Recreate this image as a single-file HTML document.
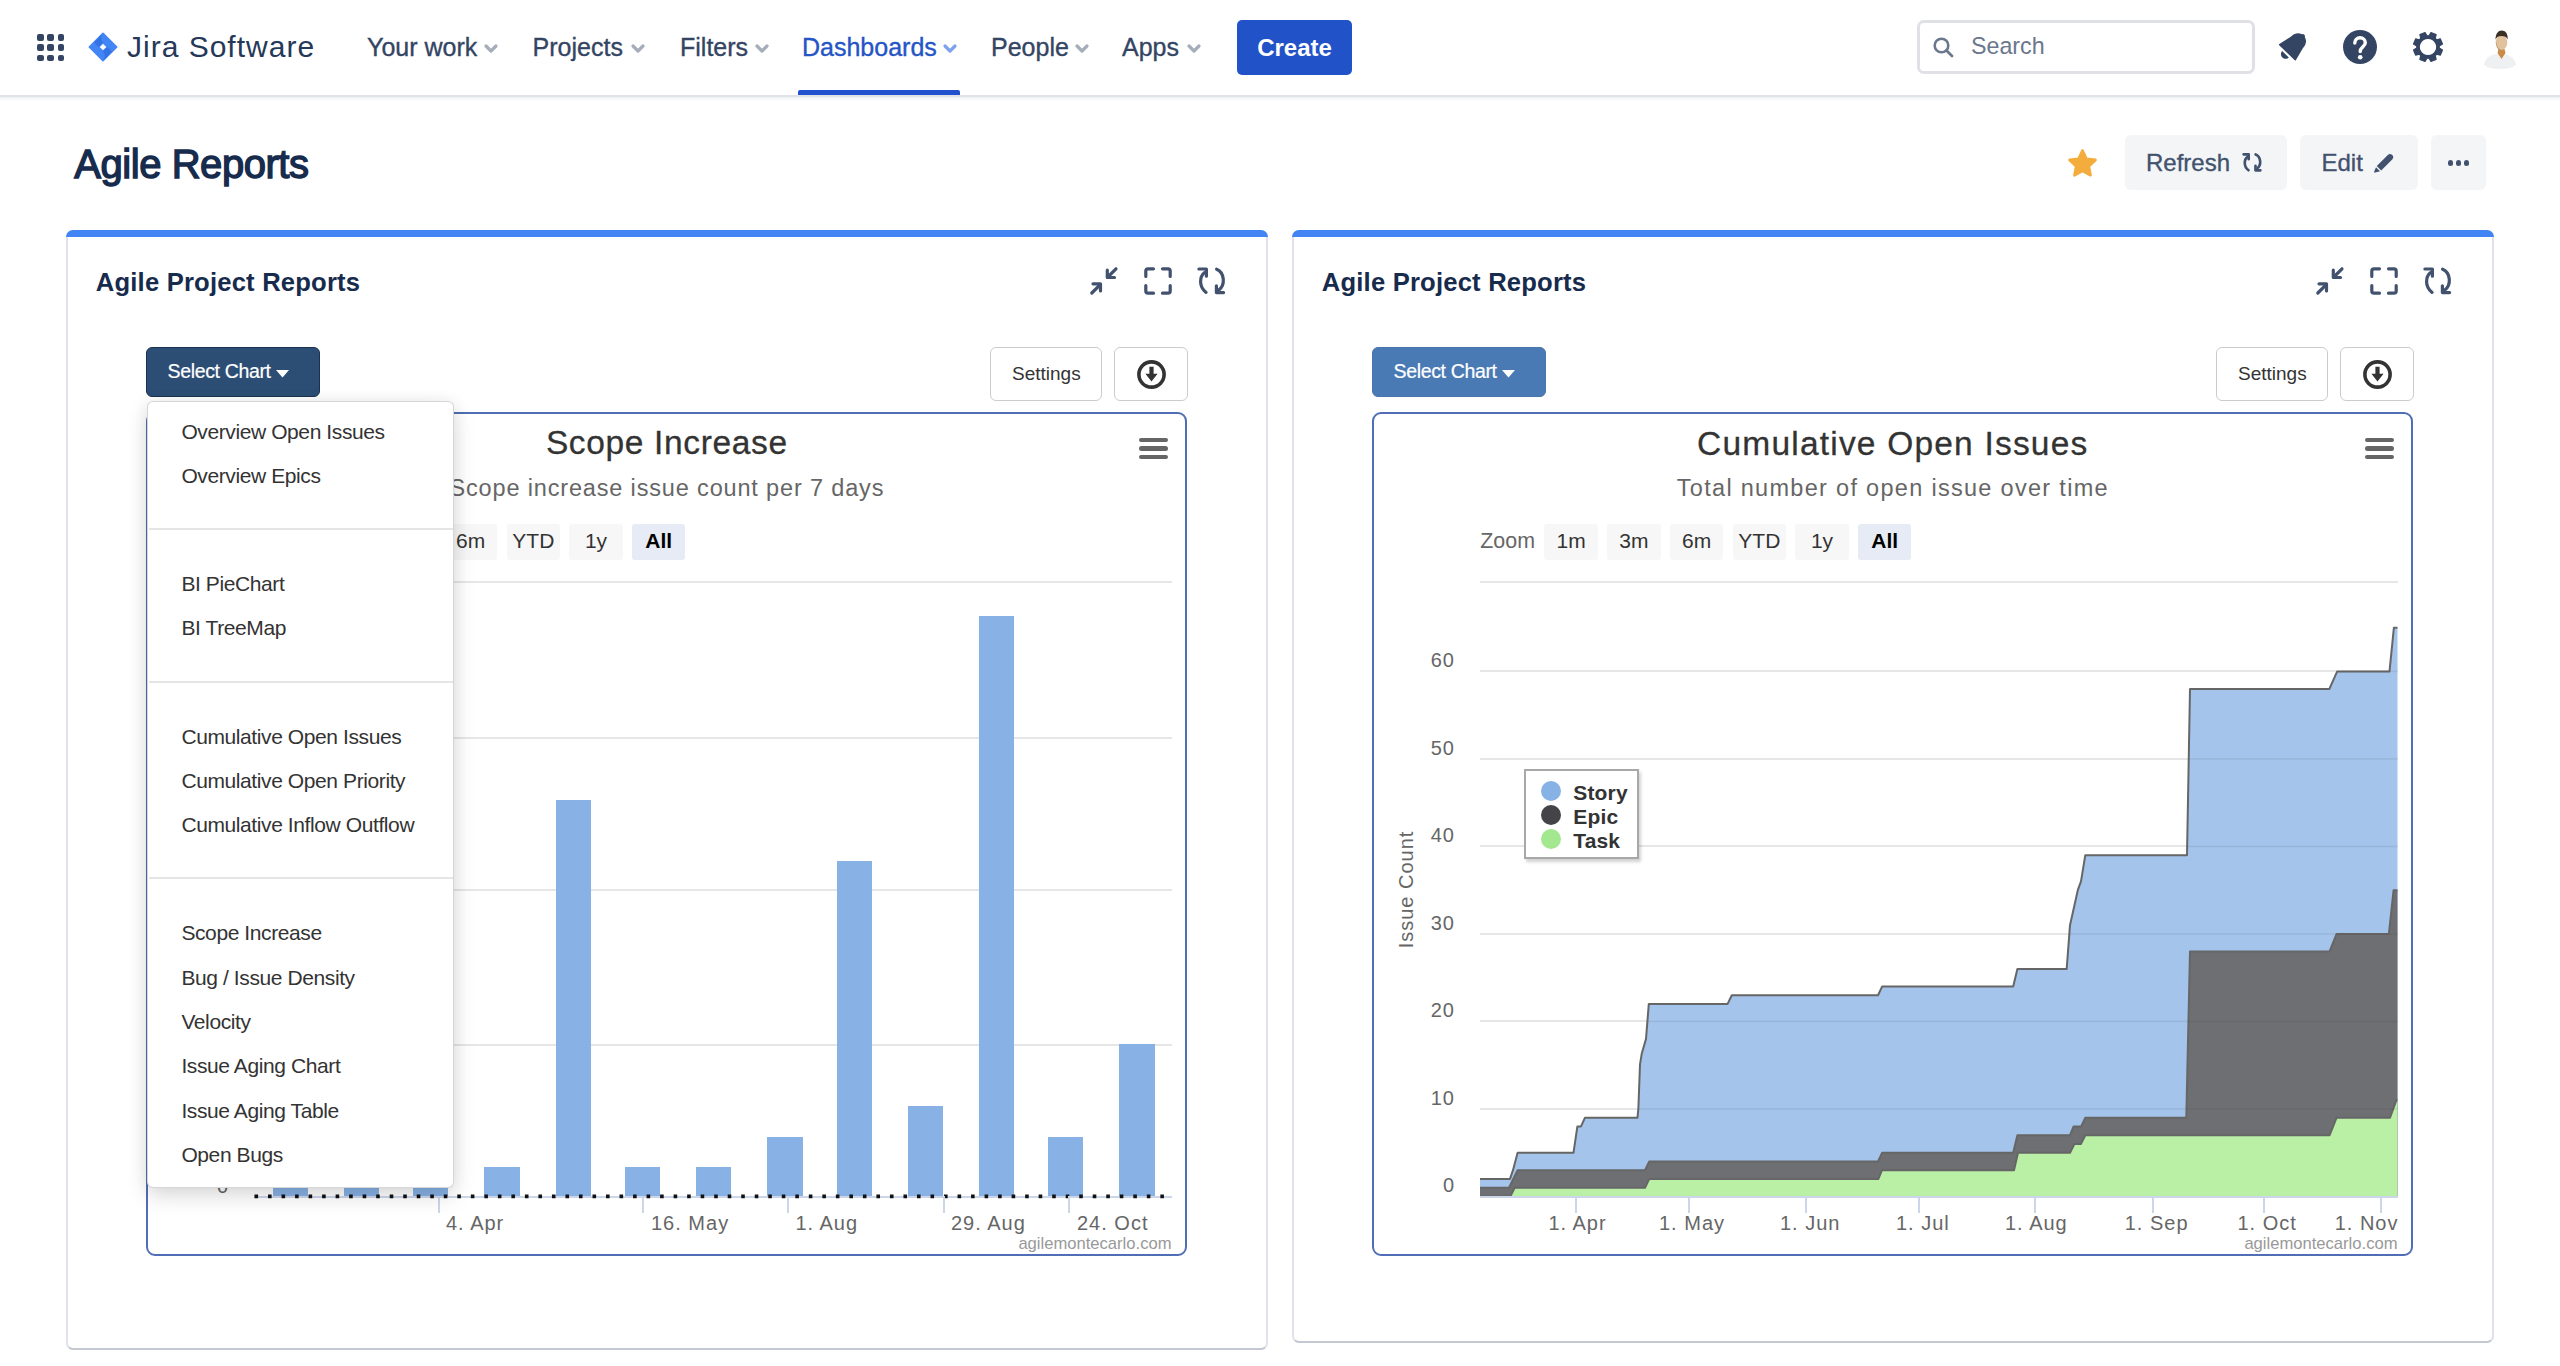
<!DOCTYPE html>
<html><head><meta charset="utf-8"><title>Agile Reports - Jira</title>
<style>
html,body{margin:0;padding:0;}
body{width:2560px;height:1366px;overflow:hidden;position:relative;background:#fff;font-family:"Liberation Sans",sans-serif;}
.t{position:absolute;white-space:nowrap;line-height:1;}
.a{position:absolute;box-sizing:border-box;}
svg{position:absolute;overflow:visible;}
</style></head><body>
<div class="a" style="left:0.00px;top:95.00px;width:2560.00px;height:2.00px;background:#e1e3e8;"></div>
<div class="a" style="left:0.00px;top:97.00px;width:2560.00px;height:4.00px;background:linear-gradient(#eef0f3,#fff);"></div>
<div class="a" style="left:37.00px;top:34.00px;width:6.80px;height:6.80px;background:#344563;border-radius:2px;"></div>
<div class="a" style="left:37.00px;top:44.35px;width:6.80px;height:6.80px;background:#344563;border-radius:2px;"></div>
<div class="a" style="left:37.00px;top:54.70px;width:6.80px;height:6.80px;background:#344563;border-radius:2px;"></div>
<div class="a" style="left:47.35px;top:34.00px;width:6.80px;height:6.80px;background:#344563;border-radius:2px;"></div>
<div class="a" style="left:47.35px;top:44.35px;width:6.80px;height:6.80px;background:#344563;border-radius:2px;"></div>
<div class="a" style="left:47.35px;top:54.70px;width:6.80px;height:6.80px;background:#344563;border-radius:2px;"></div>
<div class="a" style="left:57.70px;top:34.00px;width:6.80px;height:6.80px;background:#344563;border-radius:2px;"></div>
<div class="a" style="left:57.70px;top:44.35px;width:6.80px;height:6.80px;background:#344563;border-radius:2px;"></div>
<div class="a" style="left:57.70px;top:54.70px;width:6.80px;height:6.80px;background:#344563;border-radius:2px;"></div>
<svg style="left:88px;top:32px" width="30" height="30" viewBox="0 0 30 30">
<defs><linearGradient id="jg1" x1="0" y1="0" x2="1" y2="1"><stop offset="0" stop-color="#2a5fd8"/><stop offset="1" stop-color="#4384f5"/></linearGradient></defs>
<path d="M15 1.3 L28.7 15 L15 28.7 L1.3 15 Z M15 10.6 L10.6 15 L15 19.4 L19.4 15 Z" fill="#4285f4" fill-rule="evenodd" stroke="#4285f4" stroke-width="1.6" stroke-linejoin="round"/>
<path d="M15 1.3 C12.5 4 12.8 8 15 10.6 L10.6 15 L6.2 10.6 Z" fill="#2f6ae0" opacity=".7"/>
<path d="M15 28.7 C17.5 26 17.2 22 15 19.4 L19.4 15 L23.8 19.4 Z" fill="#2f6ae0" opacity=".7"/>
</svg>
<div class="t" style="left:127.00px;top:32.11px;font-size:30px;color:#253858;letter-spacing:1.0px;">Jira Software</div>
<div class="t" style="left:367.00px;top:34.84px;font-size:25px;color:#344563;-webkit-text-stroke:0.35px #344563;">Your work</div>
<svg style="left:484px;top:44px" width="14" height="10" viewBox="0 0 14 10"><path d="M2 2 L7 7 L12 2" fill="none" stroke="#a5adba" stroke-width="3.2" stroke-linecap="round" stroke-linejoin="round"/></svg>
<div class="t" style="left:532.60px;top:34.84px;font-size:25px;color:#344563;-webkit-text-stroke:0.35px #344563;">Projects</div>
<svg style="left:630.5px;top:44px" width="14" height="10" viewBox="0 0 14 10"><path d="M2 2 L7 7 L12 2" fill="none" stroke="#a5adba" stroke-width="3.2" stroke-linecap="round" stroke-linejoin="round"/></svg>
<div class="t" style="left:680.00px;top:34.84px;font-size:25px;color:#344563;-webkit-text-stroke:0.35px #344563;">Filters</div>
<svg style="left:754.5px;top:44px" width="14" height="10" viewBox="0 0 14 10"><path d="M2 2 L7 7 L12 2" fill="none" stroke="#a5adba" stroke-width="3.2" stroke-linecap="round" stroke-linejoin="round"/></svg>
<div class="t" style="left:802.00px;top:34.84px;font-size:25px;color:#2454c5;-webkit-text-stroke:0.35px #2454c5;">Dashboards</div>
<svg style="left:943.4px;top:44px" width="14" height="10" viewBox="0 0 14 10"><path d="M2 2 L7 7 L12 2" fill="none" stroke="#7ea3ec" stroke-width="3.2" stroke-linecap="round" stroke-linejoin="round"/></svg>
<div class="t" style="left:991.00px;top:34.84px;font-size:25px;color:#344563;-webkit-text-stroke:0.35px #344563;">People</div>
<svg style="left:1074.5px;top:44px" width="14" height="10" viewBox="0 0 14 10"><path d="M2 2 L7 7 L12 2" fill="none" stroke="#a5adba" stroke-width="3.2" stroke-linecap="round" stroke-linejoin="round"/></svg>
<div class="t" style="left:1122.00px;top:34.84px;font-size:25px;color:#344563;-webkit-text-stroke:0.35px #344563;">Apps</div>
<svg style="left:1186.5px;top:44px" width="14" height="10" viewBox="0 0 14 10"><path d="M2 2 L7 7 L12 2" fill="none" stroke="#a5adba" stroke-width="3.2" stroke-linecap="round" stroke-linejoin="round"/></svg>
<div class="a" style="left:798.00px;top:89.70px;width:162.00px;height:5.30px;background:#2151cc;border-radius:2px 2px 0 0;"></div>
<div class="a" style="left:1237.00px;top:20.00px;width:115.00px;height:54.50px;background:#2252c8;border-radius:5px;"></div>
<div class="t" style="left:794.50px;width:1000px;text-align:center;top:35.68px;font-size:24px;color:#fff;font-weight:700;">Create</div>
<div class="a" style="left:1917.00px;top:20.40px;width:337.50px;height:53.40px;border:3px solid #dfe1e6;border-radius:7px;background:#fff;"></div>
<svg style="left:1933px;top:37px" width="21" height="21" viewBox="0 0 21 21"><circle cx="8.5" cy="8.5" r="6.8" fill="none" stroke="#6b778c" stroke-width="2.6"/><path d="M13.5 13.5 L19 19" stroke="#6b778c" stroke-width="2.8" stroke-linecap="round"/></svg>
<div class="t" style="left:1971.00px;top:34.82px;font-size:23.25px;color:#6b778c;">Search</div>
<svg style="left:0;top:0" width="2560" height="100">
<g transform="translate(2287.3 52.4) rotate(44)" fill="#344563" stroke="#344563" stroke-width="1.6" stroke-linejoin="round">
<path d="M-10.8 -0.3 L10.8 -0.3 L7.6 -13.5 C7.6 -19.6 4.2 -22.6 0 -22.6 C-4.2 -22.6 -7.6 -19.6 -7.6 -13.5 Z"/>
<circle cx="0" cy="-22.6" r="2" stroke="none"/>
<path d="M-4.6 2.6 A4.6 4.6 0 0 0 4.6 2.6 Z" stroke="none"/></g></svg>
<svg style="left:2343px;top:30px" width="34" height="34" viewBox="0 0 34 34">
<circle cx="17" cy="17" r="17" fill="#344563"/>
<path d="M11.8 13 C11.8 9.8 14.2 7.8 17 7.8 C20 7.8 22.3 9.9 22.3 12.8 C22.3 16.6 17.2 17 17.2 21.6" fill="none" stroke="#fff" stroke-width="3.4" stroke-linecap="round"/>
<circle cx="17.2" cy="27.3" r="2.3" fill="#fff"/></svg>
<svg style="left:2410.5px;top:29.8px" width="34" height="34" viewBox="0 0 34 34">
<path d="M28.25,18.05 L31.50,19.98 L29.36,25.14 L25.70,24.22 L24.22,25.70 L25.14,29.36 L19.98,31.50 L18.05,28.25 L15.95,28.25 L14.02,31.50 L8.86,29.36 L9.78,25.70 L8.30,24.22 L4.64,25.14 L2.50,19.98 L5.75,18.05 L5.75,15.95 L2.50,14.02 L4.64,8.86 L8.30,9.78 L9.78,8.30 L8.86,4.64 L14.02,2.50 L15.95,5.75 L18.05,5.75 L19.98,2.50 L25.14,4.64 L24.22,8.30 L25.70,9.78 L29.36,8.86 L31.50,14.02 L28.25,15.95 Z M17 8.3 A8.7 8.7 0 1 0 17.01 8.3 Z" fill="#344563" fill-rule="evenodd" stroke="#344563" stroke-width="1.2" stroke-linejoin="round"/></svg>
<svg style="left:2482px;top:29px" width="36" height="40" viewBox="0 0 36 40">
<path d="M2 36 C3 29 8 26 14 25 L22 25 C28 26 33 29 34 36 C30 39 24 40 18 40 C12 40 6 39 2 36 Z" fill="#eff0f2"/>
<path d="M15.5 24 L19.5 30 L23.5 24 L22.5 20 L16.5 20 Z" fill="#c98a4a"/>
<ellipse cx="19.5" cy="13.5" rx="5.8" ry="7.5" fill="#e2c29c"/><path d="M14 11 C14 16 16 20 19 21 L17 21 C14.5 19 13.5 15 14 11 Z" fill="#9c6b45" opacity=".7"/>
<path d="M13.5 10.5 C13.5 4.5 16.5 1.5 19.5 1.5 C23.5 1.5 26 4.5 25.7 10.5 C24.5 7.5 22.5 7 19.5 7 C16.5 7 14.5 8 13.5 10.5 Z" fill="#3b3026"/>
</svg>
<div class="t" style="left:74.30px;top:143.84px;font-size:40px;color:#172b4d;letter-spacing:-0.45px;-webkit-text-stroke:1.4px #172b4d;">Agile Reports</div>
<svg style="left:2066px;top:148px" width="34" height="34" viewBox="0 0 34 34"><path d="M16.50,2.60 L20.38,10.86 L29.43,12.00 L22.78,18.24 L24.49,27.20 L16.50,22.80 L8.51,27.20 L10.22,18.24 L3.57,12.00 L12.62,10.86 Z" fill="#f4ad3d" stroke="#f4ad3d" stroke-width="2.8" stroke-linejoin="round"/></svg>
<div class="a" style="left:2125.00px;top:135.00px;width:161.50px;height:55.00px;background:#f4f5f7;border-radius:6px;"></div>
<div class="t" style="left:2146.00px;top:150.68px;font-size:24px;color:#42526e;-webkit-text-stroke:0.35px #42526e;">Refresh</div>
<svg style="left:2243px;top:152.8px" width="19" height="19" viewBox="0 0 28 28">
<g fill="none" stroke="#42526e" stroke-width="3.9" stroke-linecap="round" stroke-linejoin="round">
<path d="M0.9 2 L8.4 2 L8.4 9.2"/><path d="M6.6 5.6 C1.6 9.5 0.4 19.5 8.1 25.4"/>
<path d="M18.6 2.2 C26.5 5.5 28 18 20.2 23.6"/><path d="M18.4 18.8 L18.4 25.6 L25.6 25.6"/></g></svg>
<div class="a" style="left:2300.00px;top:135.00px;width:118.00px;height:55.00px;background:#f4f5f7;border-radius:6px;"></div>
<div class="t" style="left:2321.50px;top:150.68px;font-size:24px;color:#42526e;-webkit-text-stroke:0.35px #42526e;">Edit</div>
<svg style="left:2373px;top:152px" width="22" height="22" viewBox="0 0 22 22">
<path d="M14.8 3 Q17 0.8 19.2 3 Q21.4 5.2 19.2 7.4 L8.2 18.4 L3.8 14 Z" fill="#42526e"/><path d="M3 15.2 L7 19.2 L2.2 20.6 Q0.8 20.8 1.2 19.6 Z" fill="#42526e"/></svg>
<div class="a" style="left:2431.00px;top:135.00px;width:54.50px;height:55.00px;background:#f4f5f7;border-radius:6px;"></div>
<div class="a" style="left:2447.90px;top:160.40px;width:5.20px;height:5.20px;background:#42526e;border-radius:50%;"></div>
<div class="a" style="left:2455.90px;top:160.40px;width:5.20px;height:5.20px;background:#42526e;border-radius:50%;"></div>
<div class="a" style="left:2463.90px;top:160.40px;width:5.20px;height:5.20px;background:#42526e;border-radius:50%;"></div>
<div class="a" style="left:66.00px;top:230.00px;width:1202.00px;height:1119.50px;border:2px solid #e0e2e7;border-top:none;border-bottom:2.5px solid #c3c8d1;border-radius:7px;background:#fff;"></div>
<div class="a" style="left:66.00px;top:230.00px;width:1202.00px;height:7.00px;background:#4384f5;border-radius:7px 7px 0 0;"></div>
<div class="a" style="left:1292.00px;top:230.00px;width:1202.00px;height:1112.50px;border:2px solid #e0e2e7;border-top:none;border-bottom:2.5px solid #c3c8d1;border-radius:7px;background:#fff;"></div>
<div class="a" style="left:1292.00px;top:230.00px;width:1202.00px;height:7.00px;background:#4384f5;border-radius:7px 7px 0 0;"></div>
<div class="t" style="left:95.80px;top:269.53px;font-size:25.6px;color:#172b4d;font-weight:700;letter-spacing:0.2px;">Agile Project Reports</div>
<svg style="left:1089.5px;top:267px" width="28" height="28" viewBox="0 0 28 28">
<g fill="none" stroke="#42526e" stroke-width="3.2" stroke-linecap="round" stroke-linejoin="round">
<path d="M1.8 26 L10 17.8"/><path d="M3 16.8 L10.5 16.8 L10.5 24"/>
<path d="M26 1.8 L17.8 10"/><path d="M17.3 3.2 L17.3 10.5 L24.5 10.5"/></g></svg>
<svg style="left:1144px;top:267px" width="28" height="28" viewBox="0 0 28 28">
<g fill="none" stroke="#42526e" stroke-width="3.2" stroke-linecap="round" stroke-linejoin="round">
<path d="M1.8 9.5 L1.8 4 Q1.8 1.8 4 1.8 L9.5 1.8"/><path d="M18.5 1.8 L24 1.8 Q26.2 1.8 26.2 4 L26.2 9.5"/>
<path d="M26.2 18.5 L26.2 24 Q26.2 26.2 24 26.2 L18.5 26.2"/><path d="M9.5 26.2 L4 26.2 Q1.8 26.2 1.8 24 L1.8 18.5"/></g></svg>
<svg style="left:1198.2px;top:266.5px" width="28" height="28" viewBox="0 0 28 28">
<g fill="none" stroke="#42526e" stroke-width="3.2" stroke-linecap="round" stroke-linejoin="round">
<path d="M0.9 2 L8.4 2 L8.4 9.2"/><path d="M6.6 5.6 C1.6 9.5 0.4 19.5 8.1 25.4"/>
<path d="M18.6 2.2 C26.5 5.5 28 18 20.2 23.6"/><path d="M18.4 18.8 L18.4 25.6 L25.6 25.6"/></g></svg>
<div class="t" style="left:1321.80px;top:269.53px;font-size:25.6px;color:#172b4d;font-weight:700;letter-spacing:0.2px;">Agile Project Reports</div>
<svg style="left:2315.5px;top:267px" width="28" height="28" viewBox="0 0 28 28">
<g fill="none" stroke="#42526e" stroke-width="3.2" stroke-linecap="round" stroke-linejoin="round">
<path d="M1.8 26 L10 17.8"/><path d="M3 16.8 L10.5 16.8 L10.5 24"/>
<path d="M26 1.8 L17.8 10"/><path d="M17.3 3.2 L17.3 10.5 L24.5 10.5"/></g></svg>
<svg style="left:2370px;top:267px" width="28" height="28" viewBox="0 0 28 28">
<g fill="none" stroke="#42526e" stroke-width="3.2" stroke-linecap="round" stroke-linejoin="round">
<path d="M1.8 9.5 L1.8 4 Q1.8 1.8 4 1.8 L9.5 1.8"/><path d="M18.5 1.8 L24 1.8 Q26.2 1.8 26.2 4 L26.2 9.5"/>
<path d="M26.2 18.5 L26.2 24 Q26.2 26.2 24 26.2 L18.5 26.2"/><path d="M9.5 26.2 L4 26.2 Q1.8 26.2 1.8 24 L1.8 18.5"/></g></svg>
<svg style="left:2424.2px;top:266.5px" width="28" height="28" viewBox="0 0 28 28">
<g fill="none" stroke="#42526e" stroke-width="3.2" stroke-linecap="round" stroke-linejoin="round">
<path d="M0.9 2 L8.4 2 L8.4 9.2"/><path d="M6.6 5.6 C1.6 9.5 0.4 19.5 8.1 25.4"/>
<path d="M18.6 2.2 C26.5 5.5 28 18 20.2 23.6"/><path d="M18.4 18.8 L18.4 25.6 L25.6 25.6"/></g></svg>
<div class="a" style="left:146.00px;top:347.00px;width:174.00px;height:50.00px;background:#2d4e74;border:1.5px solid #1b324f;border-radius:6px;"></div>
<div class="t" style="left:167.60px;top:362.09px;font-size:19.5px;color:#fff;letter-spacing:-0.35px;-webkit-text-stroke:0.2px #fff;">Select Chart</div>
<svg style="left:276px;top:369.5px" width="13" height="8" viewBox="0 0 13 8"><path d="M0 0 L13 0 L6.5 7.5 Z" fill="#fff"/></svg>
<div class="a" style="left:1372.00px;top:347.00px;width:174.00px;height:50.00px;background:#4a7ab4;border:1.5px solid #4775ad;border-radius:6px;"></div>
<div class="t" style="left:1393.60px;top:362.09px;font-size:19.5px;color:#fff;letter-spacing:-0.35px;-webkit-text-stroke:0.2px #fff;">Select Chart</div>
<svg style="left:1502px;top:369.5px" width="13" height="8" viewBox="0 0 13 8"><path d="M0 0 L13 0 L6.5 7.5 Z" fill="#fff"/></svg>
<div class="a" style="left:990.00px;top:347.00px;width:112.00px;height:54.00px;border:1.5px solid #cccccc;border-radius:6px;background:#fff;"></div>
<div class="t" style="left:1012.00px;top:363.92px;font-size:19px;color:#333;">Settings</div>
<div class="a" style="left:1114.00px;top:347.00px;width:74.00px;height:54.00px;border:1.5px solid #cccccc;border-radius:6px;background:#fff;"></div>
<svg style="left:1137px;top:359.5px" width="29" height="29" viewBox="0 0 29 29">
<circle cx="14.5" cy="14.5" r="12.6" fill="none" stroke="#333" stroke-width="3.6"/>
<path d="M12.4 6.8 L16.6 6.8 L16.6 13.8 L20.6 13.8 L14.5 21.6 L8.4 13.8 L12.4 13.8 Z" fill="#333"/></svg>
<div class="a" style="left:146.00px;top:412.00px;width:1041.00px;height:844.00px;border:2px solid #506eb5;border-radius:9px;background:#fff;"></div>
<div class="a" style="left:1139.00px;top:437.70px;width:28.50px;height:4.60px;background:#666;border-radius:3px;"></div>
<div class="a" style="left:1139.00px;top:446.20px;width:28.50px;height:4.60px;background:#666;border-radius:3px;"></div>
<div class="a" style="left:1139.00px;top:454.70px;width:28.50px;height:4.60px;background:#666;border-radius:3px;"></div>
<div class="t" style="left:254.30px;top:530.88px;font-size:21.4px;color:#666;">Zoom</div>
<div class="a" style="left:318.40px;top:524.20px;width:53.60px;height:36.30px;background:#f7f7f7;border-radius:3px;"></div>
<div class="t" style="left:-154.80px;width:1000px;text-align:center;top:529.82px;font-size:21px;color:#333;">1m</div>
<div class="a" style="left:381.10px;top:524.20px;width:53.60px;height:36.30px;background:#f7f7f7;border-radius:3px;"></div>
<div class="t" style="left:-92.10px;width:1000px;text-align:center;top:529.82px;font-size:21px;color:#333;">3m</div>
<div class="a" style="left:443.80px;top:524.20px;width:53.60px;height:36.30px;background:#f7f7f7;border-radius:3px;"></div>
<div class="t" style="left:-29.40px;width:1000px;text-align:center;top:529.82px;font-size:21px;color:#333;">6m</div>
<div class="a" style="left:506.50px;top:524.20px;width:53.60px;height:36.30px;background:#f7f7f7;border-radius:3px;"></div>
<div class="t" style="left:33.30px;width:1000px;text-align:center;top:529.82px;font-size:21px;color:#333;">YTD</div>
<div class="a" style="left:569.20px;top:524.20px;width:53.60px;height:36.30px;background:#f7f7f7;border-radius:3px;"></div>
<div class="t" style="left:96.00px;width:1000px;text-align:center;top:529.82px;font-size:21px;color:#333;">1y</div>
<div class="a" style="left:631.90px;top:524.20px;width:53.60px;height:36.30px;background:#e6ebf5;border-radius:3px;"></div>
<div class="t" style="left:158.70px;width:1000px;text-align:center;top:529.82px;font-size:21px;color:#000;font-weight:700;">All</div>
<div class="a" style="left:254.00px;top:581.00px;width:917.50px;height:2.00px;background:#e6e6e6;"></div>
<div class="t" style="right:1388.50px;top:1235.95px;font-size:16.6px;color:#999;">agilemontecarlo.com</div>
<div class="a" style="left:254.00px;top:1195.50px;width:917.50px;height:2.00px;background:#ccd6eb;"></div>
<div class="a" style="left:2216.00px;top:347.00px;width:112.00px;height:54.00px;border:1.5px solid #cccccc;border-radius:6px;background:#fff;"></div>
<div class="t" style="left:2238.00px;top:363.92px;font-size:19px;color:#333;">Settings</div>
<div class="a" style="left:2340.00px;top:347.00px;width:74.00px;height:54.00px;border:1.5px solid #cccccc;border-radius:6px;background:#fff;"></div>
<svg style="left:2363px;top:359.5px" width="29" height="29" viewBox="0 0 29 29">
<circle cx="14.5" cy="14.5" r="12.6" fill="none" stroke="#333" stroke-width="3.6"/>
<path d="M12.4 6.8 L16.6 6.8 L16.6 13.8 L20.6 13.8 L14.5 21.6 L8.4 13.8 L12.4 13.8 Z" fill="#333"/></svg>
<div class="a" style="left:1372.00px;top:412.00px;width:1041.00px;height:844.00px;border:2px solid #506eb5;border-radius:9px;background:#fff;"></div>
<div class="a" style="left:2365.00px;top:437.70px;width:28.50px;height:4.60px;background:#666;border-radius:3px;"></div>
<div class="a" style="left:2365.00px;top:446.20px;width:28.50px;height:4.60px;background:#666;border-radius:3px;"></div>
<div class="a" style="left:2365.00px;top:454.70px;width:28.50px;height:4.60px;background:#666;border-radius:3px;"></div>
<div class="t" style="left:1480.30px;top:530.88px;font-size:21.4px;color:#666;">Zoom</div>
<div class="a" style="left:1544.40px;top:524.20px;width:53.60px;height:36.30px;background:#f7f7f7;border-radius:3px;"></div>
<div class="t" style="left:1071.20px;width:1000px;text-align:center;top:529.82px;font-size:21px;color:#333;">1m</div>
<div class="a" style="left:1607.10px;top:524.20px;width:53.60px;height:36.30px;background:#f7f7f7;border-radius:3px;"></div>
<div class="t" style="left:1133.90px;width:1000px;text-align:center;top:529.82px;font-size:21px;color:#333;">3m</div>
<div class="a" style="left:1669.80px;top:524.20px;width:53.60px;height:36.30px;background:#f7f7f7;border-radius:3px;"></div>
<div class="t" style="left:1196.60px;width:1000px;text-align:center;top:529.82px;font-size:21px;color:#333;">6m</div>
<div class="a" style="left:1732.50px;top:524.20px;width:53.60px;height:36.30px;background:#f7f7f7;border-radius:3px;"></div>
<div class="t" style="left:1259.30px;width:1000px;text-align:center;top:529.82px;font-size:21px;color:#333;">YTD</div>
<div class="a" style="left:1795.20px;top:524.20px;width:53.60px;height:36.30px;background:#f7f7f7;border-radius:3px;"></div>
<div class="t" style="left:1322.00px;width:1000px;text-align:center;top:529.82px;font-size:21px;color:#333;">1y</div>
<div class="a" style="left:1857.90px;top:524.20px;width:53.60px;height:36.30px;background:#e6ebf5;border-radius:3px;"></div>
<div class="t" style="left:1384.70px;width:1000px;text-align:center;top:529.82px;font-size:21px;color:#000;font-weight:700;">All</div>
<div class="a" style="left:1480.00px;top:581.00px;width:917.50px;height:2.00px;background:#e6e6e6;"></div>
<div class="t" style="right:162.50px;top:1235.95px;font-size:16.6px;color:#999;">agilemontecarlo.com</div>
<div class="a" style="left:1480.00px;top:1195.50px;width:917.50px;height:2.00px;background:#ccd6eb;"></div>
<div class="t" style="left:166.50px;width:1000px;text-align:center;top:426.14px;font-size:33.5px;color:#333;letter-spacing:0.65px;text-indent:0.65px;-webkit-text-stroke:0.3px #333;">Scope Increase</div>
<div class="t" style="left:449.50px;top:476.91px;font-size:23.5px;color:#666;letter-spacing:0.84px;">Scope increase issue count per 7 days</div>
<div class="a" style="left:254.00px;top:736.50px;width:917.50px;height:2.00px;background:#e6e6e6;"></div>
<div class="a" style="left:254.00px;top:889.00px;width:917.50px;height:2.00px;background:#e6e6e6;"></div>
<div class="a" style="left:254.00px;top:1043.50px;width:917.50px;height:2.00px;background:#e6e6e6;"></div>
<div class="a" style="left:272.60px;top:1167.00px;width:35.30px;height:29.00px;background:#88b2e6;"></div>
<div class="a" style="left:343.70px;top:1167.00px;width:35.30px;height:29.00px;background:#88b2e6;"></div>
<div class="a" style="left:413.00px;top:1167.00px;width:35.30px;height:29.00px;background:#88b2e6;"></div>
<div class="a" style="left:484.30px;top:1167.20px;width:35.30px;height:28.80px;background:#88b2e6;"></div>
<div class="a" style="left:555.50px;top:800.00px;width:35.30px;height:396.00px;background:#88b2e6;"></div>
<div class="a" style="left:625.00px;top:1167.20px;width:35.30px;height:28.80px;background:#88b2e6;"></div>
<div class="a" style="left:696.00px;top:1167.20px;width:35.30px;height:28.80px;background:#88b2e6;"></div>
<div class="a" style="left:767.30px;top:1137.00px;width:35.30px;height:59.00px;background:#88b2e6;"></div>
<div class="a" style="left:836.70px;top:861.00px;width:35.30px;height:335.00px;background:#88b2e6;"></div>
<div class="a" style="left:907.50px;top:1106.00px;width:35.30px;height:90.00px;background:#88b2e6;"></div>
<div class="a" style="left:979.00px;top:615.50px;width:35.30px;height:580.50px;background:#88b2e6;"></div>
<div class="a" style="left:1048.00px;top:1137.00px;width:35.30px;height:59.00px;background:#88b2e6;"></div>
<div class="a" style="left:1119.40px;top:1044.40px;width:35.30px;height:151.60px;background:#88b2e6;"></div>
<svg style="left:0;top:0" width="2560" height="1366"><path d="M254.50 1194.6 h3.6 v3.6 h-3.6 Z M268.02 1194.6 h3.6 v3.6 h-3.6 Z M281.54 1194.6 h3.6 v3.6 h-3.6 Z M295.06 1194.6 h3.6 v3.6 h-3.6 Z M308.58 1194.6 h3.6 v3.6 h-3.6 Z M322.10 1194.6 h3.6 v3.6 h-3.6 Z M335.62 1194.6 h3.6 v3.6 h-3.6 Z M349.14 1194.6 h3.6 v3.6 h-3.6 Z M362.66 1194.6 h3.6 v3.6 h-3.6 Z M376.18 1194.6 h3.6 v3.6 h-3.6 Z M389.70 1194.6 h3.6 v3.6 h-3.6 Z M403.22 1194.6 h3.6 v3.6 h-3.6 Z M416.74 1194.6 h3.6 v3.6 h-3.6 Z M430.26 1194.6 h3.6 v3.6 h-3.6 Z M443.78 1194.6 h3.6 v3.6 h-3.6 Z M457.30 1194.6 h3.6 v3.6 h-3.6 Z M470.82 1194.6 h3.6 v3.6 h-3.6 Z M484.34 1194.6 h3.6 v3.6 h-3.6 Z M497.86 1194.6 h3.6 v3.6 h-3.6 Z M511.38 1194.6 h3.6 v3.6 h-3.6 Z M524.90 1194.6 h3.6 v3.6 h-3.6 Z M538.42 1194.6 h3.6 v3.6 h-3.6 Z M551.94 1194.6 h3.6 v3.6 h-3.6 Z M565.46 1194.6 h3.6 v3.6 h-3.6 Z M578.98 1194.6 h3.6 v3.6 h-3.6 Z M592.50 1194.6 h3.6 v3.6 h-3.6 Z M606.02 1194.6 h3.6 v3.6 h-3.6 Z M619.54 1194.6 h3.6 v3.6 h-3.6 Z M633.06 1194.6 h3.6 v3.6 h-3.6 Z M646.58 1194.6 h3.6 v3.6 h-3.6 Z M660.10 1194.6 h3.6 v3.6 h-3.6 Z M673.62 1194.6 h3.6 v3.6 h-3.6 Z M687.14 1194.6 h3.6 v3.6 h-3.6 Z M700.66 1194.6 h3.6 v3.6 h-3.6 Z M714.18 1194.6 h3.6 v3.6 h-3.6 Z M727.70 1194.6 h3.6 v3.6 h-3.6 Z M741.22 1194.6 h3.6 v3.6 h-3.6 Z M754.74 1194.6 h3.6 v3.6 h-3.6 Z M768.26 1194.6 h3.6 v3.6 h-3.6 Z M781.78 1194.6 h3.6 v3.6 h-3.6 Z M795.30 1194.6 h3.6 v3.6 h-3.6 Z M808.82 1194.6 h3.6 v3.6 h-3.6 Z M822.34 1194.6 h3.6 v3.6 h-3.6 Z M835.86 1194.6 h3.6 v3.6 h-3.6 Z M849.38 1194.6 h3.6 v3.6 h-3.6 Z M862.90 1194.6 h3.6 v3.6 h-3.6 Z M876.42 1194.6 h3.6 v3.6 h-3.6 Z M889.94 1194.6 h3.6 v3.6 h-3.6 Z M903.46 1194.6 h3.6 v3.6 h-3.6 Z M916.98 1194.6 h3.6 v3.6 h-3.6 Z M930.50 1194.6 h3.6 v3.6 h-3.6 Z M944.02 1194.6 h3.6 v3.6 h-3.6 Z M957.54 1194.6 h3.6 v3.6 h-3.6 Z M971.06 1194.6 h3.6 v3.6 h-3.6 Z M984.58 1194.6 h3.6 v3.6 h-3.6 Z M998.10 1194.6 h3.6 v3.6 h-3.6 Z M1011.62 1194.6 h3.6 v3.6 h-3.6 Z M1025.14 1194.6 h3.6 v3.6 h-3.6 Z M1038.66 1194.6 h3.6 v3.6 h-3.6 Z M1052.18 1194.6 h3.6 v3.6 h-3.6 Z M1065.70 1194.6 h3.6 v3.6 h-3.6 Z M1079.22 1194.6 h3.6 v3.6 h-3.6 Z M1092.74 1194.6 h3.6 v3.6 h-3.6 Z M1106.26 1194.6 h3.6 v3.6 h-3.6 Z M1119.78 1194.6 h3.6 v3.6 h-3.6 Z M1133.30 1194.6 h3.6 v3.6 h-3.6 Z M1146.82 1194.6 h3.6 v3.6 h-3.6 Z M1160.34 1194.6 h3.6 v3.6 h-3.6 Z" fill="#111"/></svg>
<div class="a" style="left:438.00px;top:1196.00px;width:2.00px;height:16.50px;background:#ccd6eb;"></div>
<div class="a" style="left:641.50px;top:1196.00px;width:2.00px;height:16.50px;background:#ccd6eb;"></div>
<div class="a" style="left:786.50px;top:1196.00px;width:2.00px;height:16.50px;background:#ccd6eb;"></div>
<div class="a" style="left:943.00px;top:1196.00px;width:2.00px;height:16.50px;background:#ccd6eb;"></div>
<div class="a" style="left:1068.00px;top:1196.00px;width:2.00px;height:16.50px;background:#ccd6eb;"></div>
<div class="t" style="left:446.00px;top:1213.07px;font-size:20px;color:#666;letter-spacing:1px;">4. Apr</div>
<div class="t" style="left:651.00px;top:1213.07px;font-size:20px;color:#666;letter-spacing:1px;">16. May</div>
<div class="t" style="left:795.40px;top:1213.07px;font-size:20px;color:#666;letter-spacing:1px;">1. Aug</div>
<div class="t" style="left:951.00px;top:1213.07px;font-size:20px;color:#666;letter-spacing:1px;">29. Aug</div>
<div class="t" style="left:1077.00px;top:1213.07px;font-size:20px;color:#666;letter-spacing:1px;">24. Oct</div>
<div class="t" style="right:2332.00px;top:1176.07px;font-size:20px;color:#666;">0</div>
<div class="t" style="left:1392.20px;width:1000px;text-align:center;top:426.64px;font-size:33.5px;color:#333;letter-spacing:1.2px;text-indent:1.2px;-webkit-text-stroke:0.3px #333;">Cumulative Open Issues</div>
<div class="t" style="left:1392.20px;width:1000px;text-align:center;top:476.81px;font-size:23.5px;color:#666;letter-spacing:1.3px;text-indent:1.3px;">Total number of open issue over time</div>
<div class="a" style="left:1480.00px;top:1107.90px;width:917.50px;height:2.00px;background:#e6e6e6;"></div>
<div class="a" style="left:1480.00px;top:1020.40px;width:917.50px;height:2.00px;background:#e6e6e6;"></div>
<div class="a" style="left:1480.00px;top:932.90px;width:917.50px;height:2.00px;background:#e6e6e6;"></div>
<div class="a" style="left:1480.00px;top:845.40px;width:917.50px;height:2.00px;background:#e6e6e6;"></div>
<div class="a" style="left:1480.00px;top:757.90px;width:917.50px;height:2.00px;background:#e6e6e6;"></div>
<div class="a" style="left:1480.00px;top:670.40px;width:917.50px;height:2.00px;background:#e6e6e6;"></div>
<div class="t" style="right:1106.00px;top:1175.47px;font-size:20px;color:#666;letter-spacing:1px;margin-right:-1px;">0</div>
<div class="t" style="right:1106.00px;top:1087.97px;font-size:20px;color:#666;letter-spacing:1px;margin-right:-1px;">10</div>
<div class="t" style="right:1106.00px;top:1000.47px;font-size:20px;color:#666;letter-spacing:1px;margin-right:-1px;">20</div>
<div class="t" style="right:1106.00px;top:912.97px;font-size:20px;color:#666;letter-spacing:1px;margin-right:-1px;">30</div>
<div class="t" style="right:1106.00px;top:825.47px;font-size:20px;color:#666;letter-spacing:1px;margin-right:-1px;">40</div>
<div class="t" style="right:1106.00px;top:737.97px;font-size:20px;color:#666;letter-spacing:1px;margin-right:-1px;">50</div>
<div class="t" style="right:1106.00px;top:650.47px;font-size:20px;color:#666;letter-spacing:1px;margin-right:-1px;">60</div>
<svg style="left:0;top:0" width="2560" height="1366"><text x="0" y="0" transform="translate(1412.5 889.5) rotate(-90)" text-anchor="middle" font-family="Liberation Sans" font-size="20" letter-spacing="1" fill="#666">Issue Count</text></svg>
<svg style="left:0;top:0" width="2560" height="1366"><path d="M1480.0 1178.9 L1510.0 1178.9 L1513.0 1170.2 L1517.6 1152.7 L1573.5 1152.7 L1577.4 1126.4 L1581.0 1126.4 L1585.0 1117.7 L1637.5 1117.7 L1638.4 1108.0 L1640.0 1064.3 L1641.7 1053.8 L1646.0 1038.9 L1648.8 1003.9 L1727.6 1003.9 L1731.8 995.2 L1878.0 995.2 L1882.2 986.4 L2013.2 986.4 L2017.4 968.9 L2066.7 968.9 L2070.0 925.2 L2077.8 890.2 L2081.0 881.4 L2085.3 855.2 L2187.0 855.2 L2190.0 688.9 L2329.4 688.9 L2337.2 671.4 L2389.5 671.4 L2393.9 627.7 L2397.5 627.7 L2397.5 1196.4 L1480 1196.4 Z" fill="#a4c4ec"/><path d="M1480.0 1178.9 L1510.0 1178.9 L1513.0 1170.2 L1517.6 1152.7 L1573.5 1152.7 L1577.4 1126.4 L1581.0 1126.4 L1585.0 1117.7 L1637.5 1117.7 L1638.4 1108.0 L1640.0 1064.3 L1641.7 1053.8 L1646.0 1038.9 L1648.8 1003.9 L1727.6 1003.9 L1731.8 995.2 L1878.0 995.2 L1882.2 986.4 L2013.2 986.4 L2017.4 968.9 L2066.7 968.9 L2070.0 925.2 L2077.8 890.2 L2081.0 881.4 L2085.3 855.2 L2187.0 855.2 L2190.0 688.9 L2329.4 688.9 L2337.2 671.4 L2389.5 671.4 L2393.9 627.7 L2397.5 627.7" fill="none" stroke="#666" stroke-width="2" stroke-linejoin="round"/><path d="M1480.0 1187.7 L1509.0 1187.7 L1517.6 1170.2 L1645.0 1170.2 L1649.3 1161.4 L1878.0 1161.4 L1882.2 1152.7 L2013.2 1152.7 L2017.4 1135.2 L2070.0 1135.2 L2073.6 1126.4 L2081.2 1126.4 L2085.3 1117.7 L2186.3 1117.7 L2190.0 951.4 L2329.6 951.4 L2336.6 933.9 L2388.9 933.9 L2393.6 890.2 L2397.5 890.2 L2397.5 1196.4 L1480 1196.4 Z" fill="#6e6f73"/><path d="M1480.0 1187.7 L1509.0 1187.7 L1517.6 1170.2 L1645.0 1170.2 L1649.3 1161.4 L1878.0 1161.4 L1882.2 1152.7 L2013.2 1152.7 L2017.4 1135.2 L2070.0 1135.2 L2073.6 1126.4 L2081.2 1126.4 L2085.3 1117.7 L2186.3 1117.7 L2190.0 951.4 L2329.6 951.4 L2336.6 933.9 L2388.9 933.9 L2393.6 890.2 L2397.5 890.2" fill="none" stroke="#666" stroke-width="2" stroke-linejoin="round"/><path d="M1480.0 1196.4 L1510.4 1196.4 L1514.6 1187.7 L1645.0 1187.7 L1649.3 1178.9 L1878.4 1178.9 L1882.0 1170.2 L2014.0 1170.2 L2018.0 1152.7 L2070.0 1152.7 L2074.5 1143.9 L2081.0 1143.9 L2085.3 1135.2 L2329.6 1135.2 L2336.6 1117.7 L2390.0 1117.7 L2396.4 1100.2 L2397.5 1100.2 L2397.5 1196.4 L1480 1196.4 Z" fill="#b9f0a5"/><path d="M1480.0 1196.4 L1510.4 1196.4 L1514.6 1187.7 L1645.0 1187.7 L1649.3 1178.9 L1878.4 1178.9 L1882.0 1170.2 L2014.0 1170.2 L2018.0 1152.7 L2070.0 1152.7 L2074.5 1143.9 L2081.0 1143.9 L2085.3 1135.2 L2329.6 1135.2 L2336.6 1117.7 L2390.0 1117.7 L2396.4 1100.2 L2397.5 1100.2" fill="none" stroke="#666" stroke-width="2" stroke-linejoin="round"/></svg>
<svg style="left:0;top:0" width="2560" height="1366"><defs><clipPath id="sc"><path d="M1480.0 1178.9 L1510.0 1178.9 L1513.0 1170.2 L1517.6 1152.7 L1573.5 1152.7 L1577.4 1126.4 L1581.0 1126.4 L1585.0 1117.7 L1637.5 1117.7 L1638.4 1108.0 L1640.0 1064.3 L1641.7 1053.8 L1646.0 1038.9 L1648.8 1003.9 L1727.6 1003.9 L1731.8 995.2 L1878.0 995.2 L1882.2 986.4 L2013.2 986.4 L2017.4 968.9 L2066.7 968.9 L2070.0 925.2 L2077.8 890.2 L2081.0 881.4 L2085.3 855.2 L2187.0 855.2 L2190.0 688.9 L2329.4 688.9 L2337.2 671.4 L2389.5 671.4 L2393.9 627.7 L2397.5 627.7 L2397.5 1196.4 L1480 1196.4 Z"/></clipPath></defs><g clip-path="url(#sc)" fill="rgba(60,60,60,.10)"><rect x="1480" y="1108.15" width="917.5" height="1.5"/><rect x="1480" y="1020.65" width="917.5" height="1.5"/><rect x="1480" y="933.15" width="917.5" height="1.5"/><rect x="1480" y="845.65" width="917.5" height="1.5"/><rect x="1480" y="758.15" width="917.5" height="1.5"/><rect x="1480" y="670.65" width="917.5" height="1.5"/></g></svg>
<div class="a" style="left:1480.00px;top:1195.50px;width:917.50px;height:2.00px;background:#ccd6eb;"></div>
<div class="a" style="left:1575.30px;top:1196.00px;width:2.00px;height:16.50px;background:#ccd6eb;"></div>
<div class="t" style="left:1548.40px;top:1213.07px;font-size:20px;color:#666;letter-spacing:1px;">1. Apr</div>
<div class="a" style="left:1687.70px;top:1196.00px;width:2.00px;height:16.50px;background:#ccd6eb;"></div>
<div class="t" style="left:1659.00px;top:1213.07px;font-size:20px;color:#666;letter-spacing:1px;">1. May</div>
<div class="a" style="left:1804.60px;top:1196.00px;width:2.00px;height:16.50px;background:#ccd6eb;"></div>
<div class="t" style="left:1780.00px;top:1213.07px;font-size:20px;color:#666;letter-spacing:1px;">1. Jun</div>
<div class="a" style="left:1917.80px;top:1196.00px;width:2.00px;height:16.50px;background:#ccd6eb;"></div>
<div class="t" style="left:1896.00px;top:1213.07px;font-size:20px;color:#666;letter-spacing:1px;">1. Jul</div>
<div class="a" style="left:2034.30px;top:1196.00px;width:2.00px;height:16.50px;background:#ccd6eb;"></div>
<div class="t" style="left:2005.00px;top:1213.07px;font-size:20px;color:#666;letter-spacing:1px;">1. Aug</div>
<div class="a" style="left:2151.60px;top:1196.00px;width:2.00px;height:16.50px;background:#ccd6eb;"></div>
<div class="t" style="left:2124.70px;top:1213.07px;font-size:20px;color:#666;letter-spacing:1px;">1. Sep</div>
<div class="a" style="left:2263.00px;top:1196.00px;width:2.00px;height:16.50px;background:#ccd6eb;"></div>
<div class="t" style="left:2237.50px;top:1213.07px;font-size:20px;color:#666;letter-spacing:1px;">1. Oct</div>
<div class="a" style="left:2380.00px;top:1196.00px;width:2.00px;height:16.50px;background:#ccd6eb;"></div>
<div class="t" style="left:2334.70px;top:1213.07px;font-size:20px;color:#666;letter-spacing:1px;">1. Nov</div>
<div class="a" style="left:1524.30px;top:769.30px;width:114.50px;height:89.70px;border:2px solid #a8a8a8;background:#fff;box-shadow:2px 3px 3px rgba(0,0,0,.18);"></div>
<div class="a" style="left:1541.00px;top:781.20px;width:20.00px;height:20.00px;background:#86b2e6;border-radius:50%;"></div>
<div class="t" style="left:1573.30px;top:782.32px;font-size:21px;color:#333;font-weight:700;letter-spacing:0.15px;">Story</div>
<div class="a" style="left:1541.00px;top:805.20px;width:20.00px;height:20.00px;background:#434348;border-radius:50%;"></div>
<div class="t" style="left:1573.30px;top:806.32px;font-size:21px;color:#333;font-weight:700;letter-spacing:0.15px;">Epic</div>
<div class="a" style="left:1541.00px;top:828.60px;width:20.00px;height:20.00px;background:#a3e88f;border-radius:50%;"></div>
<div class="t" style="left:1573.30px;top:829.72px;font-size:21px;color:#333;font-weight:700;letter-spacing:0.15px;">Task</div>
<div class="a" style="left:147.00px;top:401.00px;width:307.00px;height:786.50px;background:#fff;border:1.5px solid rgba(0,0,0,.16);border-radius:6px;box-shadow:0 8px 22px rgba(0,0,0,.14),0 0 16px rgba(0,0,0,.05);"></div>
<div class="t" style="left:181.40px;top:420.52px;font-size:21px;color:#333;letter-spacing:-0.4px;">Overview Open Issues</div>
<div class="t" style="left:181.40px;top:464.52px;font-size:21px;color:#333;letter-spacing:-0.4px;">Overview Epics</div>
<div class="t" style="left:181.40px;top:573.12px;font-size:21px;color:#333;letter-spacing:-0.4px;">BI PieChart</div>
<div class="t" style="left:181.40px;top:616.92px;font-size:21px;color:#333;letter-spacing:-0.4px;">BI TreeMap</div>
<div class="t" style="left:181.40px;top:726.22px;font-size:21px;color:#333;letter-spacing:-0.4px;">Cumulative Open Issues</div>
<div class="t" style="left:181.40px;top:770.32px;font-size:21px;color:#333;letter-spacing:-0.4px;">Cumulative Open Priority</div>
<div class="t" style="left:181.40px;top:813.52px;font-size:21px;color:#333;letter-spacing:-0.4px;">Cumulative Inflow Outflow</div>
<div class="t" style="left:181.40px;top:922.22px;font-size:21px;color:#333;letter-spacing:-0.4px;">Scope Increase</div>
<div class="t" style="left:181.40px;top:966.52px;font-size:21px;color:#333;letter-spacing:-0.4px;">Bug / Issue Density</div>
<div class="t" style="left:181.40px;top:1010.82px;font-size:21px;color:#333;letter-spacing:-0.4px;">Velocity</div>
<div class="t" style="left:181.40px;top:1054.92px;font-size:21px;color:#333;letter-spacing:-0.4px;">Issue Aging Chart</div>
<div class="t" style="left:181.40px;top:1099.72px;font-size:21px;color:#333;letter-spacing:-0.4px;">Issue Aging Table</div>
<div class="t" style="left:181.40px;top:1144.12px;font-size:21px;color:#333;letter-spacing:-0.4px;">Open Bugs</div>
<div class="a" style="left:148.50px;top:527.50px;width:304.00px;height:2.00px;background:#e5e5e5;"></div>
<div class="a" style="left:148.50px;top:681.30px;width:304.00px;height:2.00px;background:#e5e5e5;"></div>
<div class="a" style="left:148.50px;top:877.20px;width:304.00px;height:2.00px;background:#e5e5e5;"></div>
</body></html>
